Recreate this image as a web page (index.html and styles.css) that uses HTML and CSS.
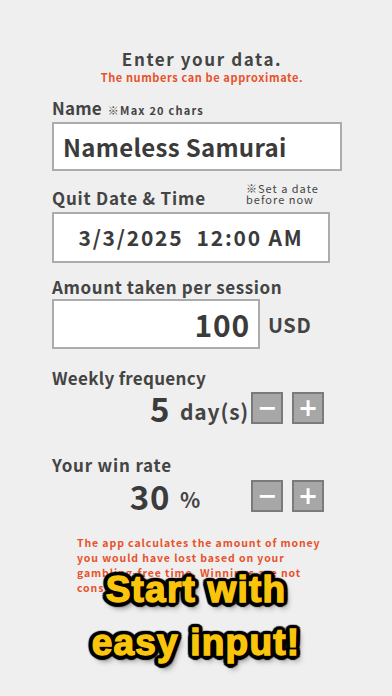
FILE: index.html
```html
<!DOCTYPE html>
<html lang="en">
<head>
    <meta charset="UTF-8">
    <meta name="viewport" content="width=device-width, initial-scale=1.0">
    <title>Enter your data</title>
    <link rel="stylesheet" href="styles.css">
</head>
<body>
    <div class="screen">
        <h1 class="title">Enter your data.</h1>
        <div class="sub">The numbers can be approximate.</div>

        <div class="label-row name-row">
            <span class="label name-label">Name</span>
            <span class="note">※Max 20 chars</span>
        </div>
        <div class="box name-box">Nameless Samurai</div>

        <div class="label-row date-row">
            <span class="label date-label">Quit Date &amp; Time</span>
            <span class="note note-2">※Set a date<br>before now</span>
        </div>
        <div class="box date-box">3/3/2025&nbsp;&nbsp;12:00 AM</div>

        <div class="label amount-label">Amount taken per session</div>
        <div class="amount-row">
            <div class="box amount-box">100</div>
            <span class="currency">USD</span>
        </div>

        <div class="label freq-label">Weekly frequency</div>
        <div class="stepper freq-row">
            <span class="num">5</span>
            <span class="unit">day(s)</span>
            <button class="step">&minus;</button>
            <button class="step">+</button>
        </div>

        <div class="label rate-label">Your win rate</div>
        <div class="stepper rate-row">
            <span class="num">30</span>
            <span class="unit">%</span>
            <button class="step">&minus;</button>
            <button class="step">+</button>
        </div>

        <p class="notice">The app calculates the amount of money you would have lost based on your gambling-free time. Winnings are not considered.</p>

        <div class="overlay">Start with<br>easy input!</div>
    </div>
</body>
</html>
```

FILE: styles.css
```css
body {
    margin: 0;
    background-color: #efefef;
    font-family: "Noto Sans CJK JP", "Noto Sans", sans-serif;
    color: #444;
}

.screen {
    position: relative;
    width: 392px;
    height: 696px;
    padding: 0 50px 0 52px;
    box-sizing: border-box;
    overflow: hidden;
}

.title {
    margin: 0 0 0 10px;
    padding-top: 48px;
    font-size: 17px;
    line-height: 22px;
    font-weight: 700;
    letter-spacing: 1.6px;
    text-align: center;
}

.sub {
    margin-left: 10px;
    font-size: 11px;
    line-height: 14px;
    font-weight: 700;
    letter-spacing: 0.6px;
    color: #e8522b;
    text-align: center;
}

.label {
    font-size: 17px;
    line-height: 22px;
    font-weight: 700;
    letter-spacing: 0.8px;
}

.label-row {
    display: flex;
    align-items: baseline;
}

.note {
    font-size: 11px;
    line-height: 12px;
    font-weight: 700;
    letter-spacing: 1.2px;
}

.name-row {
    margin-top: 13px;
}

.name-label {
    letter-spacing: 0.2px;
}

.name-row .note {
    margin-left: 6px;
}

.box {
    background-color: #fff;
    border: 2px solid #acacac;
    box-sizing: border-box;
    color: #3b3b3b;
    font-weight: 700;
}

.name-box {
    margin-top: 3px;
    width: 290px;
    height: 49px;
    padding-left: 9px;
    font-size: 24px;
    line-height: 45px;
    letter-spacing: 0.3px;
}

.date-row {
    margin-top: 12px;
    height: 26px;
    align-items: flex-end;
}

.date-label {
    flex: 0 0 194px;
}

.note-2 {
    align-self: flex-start;
    font-weight: 400;
    line-height: 11px;
    letter-spacing: 1px;
}

.date-box {
    margin-top: 3px;
    width: 278px;
    height: 51px;
    font-size: 21px;
    line-height: 47px;
    letter-spacing: 1.8px;
    text-align: center;
}

.amount-label {
    margin-top: 13px;
    letter-spacing: 0.6px;
}

.amount-row {
    display: flex;
    align-items: center;
    margin-top: 1px;
}

.amount-box {
    width: 208px;
    height: 50px;
    padding-right: 8px;
    font-size: 30px;
    line-height: 46px;
    text-align: right;
    letter-spacing: 0.8px;
}

.currency {
    margin-left: 8px;
    font-size: 20px;
    font-weight: 700;
    letter-spacing: 0.6px;
}

.freq-label {
    margin-top: 18px;
    letter-spacing: 0.3px;
}

.stepper {
    display: flex;
    align-items: center;
    height: 32px;
}

.freq-row {
    margin-top: 3px;
}

.rate-label {
    margin-top: 30px;
}

.rate-row {
    margin-top: 4px;
}

.num {
    width: 118px;
    text-align: right;
    font-size: 33px;
    line-height: 32px;
    font-weight: 700;
    letter-spacing: 0.6px;
    color: #3b3b3b;
}

.unit {
    width: 69px;
    margin-left: 10px;
    font-size: 21px;
    font-weight: 700;
    letter-spacing: 0.8px;
    padding-top: 6px;
}

.step {
    width: 32px;
    height: 32px;
    margin: 0 9px 0 2px;
    padding: 0;
    background-color: #a7a7a7;
    border: 2px solid #7b7b7b;
    color: #fff;
    font-family: "DejaVu Sans", sans-serif;
    font-size: 24px;
    font-weight: 700;
    line-height: 26px;
}

.step + .step {
    margin-left: 0;
}

.notice {
    margin: 23px 0 0 25px;
    font-size: 10.5px;
    line-height: 15px;
    font-weight: 700;
    letter-spacing: 0.9px;
    color: #e8522b;
}

.overlay {
    position: absolute;
    top: 563px;
    left: 0;
    right: 0;
    font-family: "Liberation Sans", Arial, sans-serif;
    font-size: 37px;
    line-height: 53px;
    font-weight: 700;
    letter-spacing: 1.2px;
    text-align: center;
    color: #fbc50c;
    -webkit-text-stroke: 1.4px #fbc50c;
    text-shadow:
        4.5px 0 1px #000, -4.5px 0 1px #000, 0 4.5px 1px #000, 0 -4.5px 1px #000,
        3.2px 3.2px 1px #000, -3.2px 3.2px 1px #000, 3.2px -3.2px 1px #000, -3.2px -3.2px 1px #000,
        4.2px 1.7px 1px #000, -4.2px 1.7px 1px #000, 4.2px -1.7px 1px #000, -4.2px -1.7px 1px #000,
        1.7px 4.2px 1px #000, -1.7px 4.2px 1px #000, 1.7px -4.2px 1px #000, -1.7px -4.2px 1px #000,
        3px 5px 6px rgba(0, 0, 0, 0.7);
}
```
